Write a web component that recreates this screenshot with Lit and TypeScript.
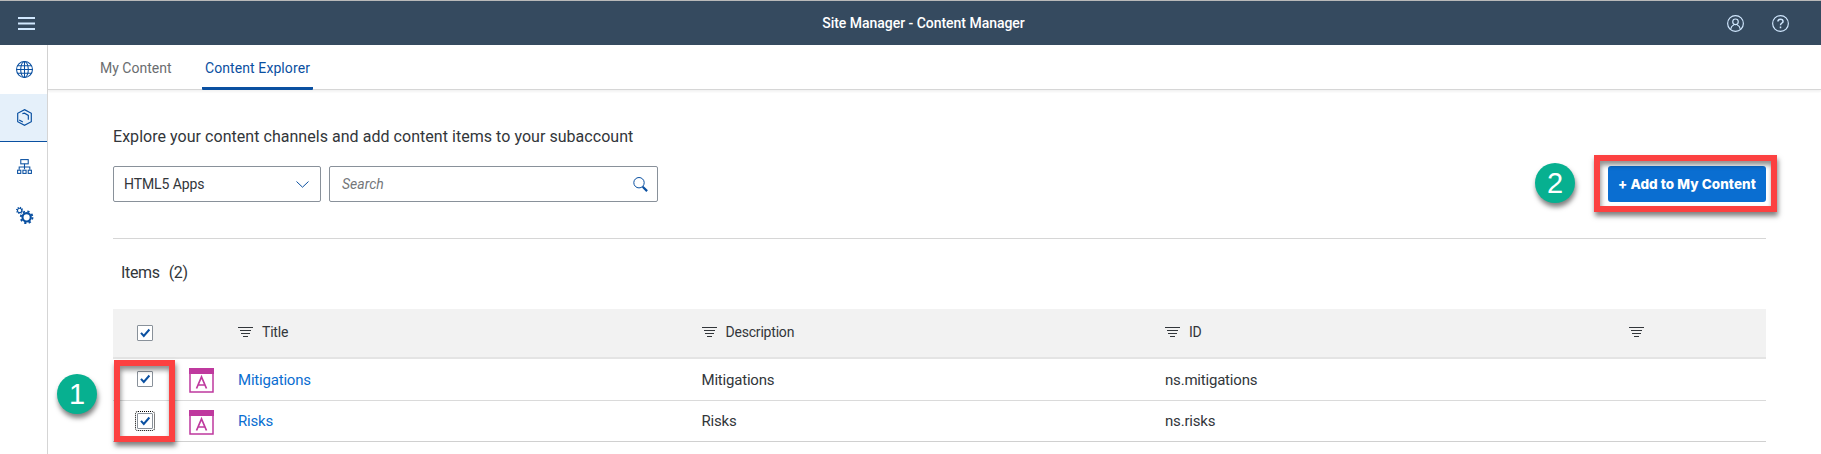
import { LitElement, html, css, svg } from 'lit';
import { customElement } from 'lit/decorators.js';

interface Item {
  title: string;
  id: string;
  focused: boolean;
}

const items: Item[] = [
  { title: 'Mitigations', id: 'ns.mitigations', focused: false },
  { title: 'Risks', id: 'ns.risks', focused: true },
];

const globe = svg`<g fill="none" stroke="currentColor" stroke-width="1"><circle cx="8" cy="8" r="7.5"/><ellipse cx="8" cy="8" rx="3.6" ry="7.5"/><path d="M8 .5v15M1.4 4.5h13.2M.5 8h15M1.4 11.5h13.2" /></g>`;
const hexagon = svg`<g fill="none" stroke="currentColor" stroke-width="1.1"><path d="M8 .6 14.4 4v8L8 15.4 1.6 12V4Z"/><path d="M6 4.3 8 3.9 11.6 6v4.2M3 10.3l3.4 2"/></g>`;
const hierarchy = svg`<g fill="none" stroke="currentColor" stroke-width="1"><rect x="4.5" y="1.5" width="7" height="4"/><path d="M8 5.5v5M3 11V8.5h10V11"/><rect x="1.5" y="11.5" width="3" height="3"/><rect x="6.5" y="11.5" width="3" height="3"/><rect x="11.5" y="11.5" width="3" height="3"/></g>`;
const gears = svg`<g fill="none" stroke="currentColor"><circle cx="10" cy="9.7" r="3.9" stroke-width="2"/><circle cx="10" cy="9.7" r="5.5" stroke-width="1.8" stroke-dasharray="2.1 2.22"/><circle cx="3.4" cy="3.2" r="2" stroke-width="1"/><circle cx="3.4" cy="3.2" r="2.9" stroke-width="1" stroke-dasharray="1.1 1.18"/></g>`;

@customElement('app-root')
export class AppRoot extends LitElement {
  static styles = css`
    :host { display: block; height: 454px; overflow: hidden; background: #fff; color: #32363a; font: 14px/20px Roboto, sans-serif; }
    * { box-sizing: border-box; }
    svg { display: block; overflow: visible; }
    .shell { height: 45px; border-top: 1px solid #b9b9b9; background: #354a5f; color: #fff; display: grid; grid-template-columns: 1fr auto 1fr; align-items: center; padding: 0 32px 0 18px; }
    .shell-title { font-weight: 500; letter-spacing: -.03px; margin-left: 28px; margin-right: -12px; }
    .actions { display: flex; justify-content: flex-end; gap: 28px; color: #d1e8ff; }
    .body { display: flex; height: 409px; }
    .side { flex: none; width: 48px; border-right: 1px solid #d5d5d5; color: #0a50a1; }
    .nav { height: 49px; padding-left: 16px; display: flex; align-items: center; }
    .nav.selected { background: #e5f0fa; height: 48px; border-bottom: 1px solid #0a50a1; }
    .main { flex: 1; min-width: 0; }
    .tabs { display: flex; height: 45px; padding-left: 44px; gap: 22px; border-bottom: 1px solid #d6d6d6; box-shadow: 0 2px 2px #0000000d; color: #6a6d70; }
    .tab { padding: 13px 0 0 3px; height: 45px; white-space: nowrap; }
    .tab.first { width: 88px; padding-left: 8px; }
    .tab.active { width: 111px; color: #0a50a1; border-bottom: 3px solid #0a50a1; border-radius: 1px; letter-spacing: .09px; }
    .page { padding: 36px 55px 0 65px; }
    .lead { font-size: 16px; line-height: 22px; letter-spacing: .04px; }
    .toolbar { position: relative; margin-top: 18px; display: flex; height: 36px; gap: 8px; }
    .field { border: 1px solid #89919a; border-radius: 2px; display: flex; align-items: center; justify-content: space-between; padding: 0 11px 0 10px; }
    .select { width: 208px; letter-spacing: -.1px; }
    .search { width: 329px; padding: 0 9px 0 12px; font-style: italic; color: #74777a; }
    .blue { color: #0a50a1; }
    .add { margin-left: auto; width: 158px; border: 0; border-radius: 3px; background: #0a6ed1; color: #fff; font: 800 13.5px Inter, sans-serif; letter-spacing: .06px; padding: 0; white-space: nowrap; }
    .frame { position: absolute; border: 6px solid #fc4141; box-shadow: 1px 4px 5px #00000080, inset 1px 4px 5px #00000070; pointer-events: none; }
    .frame.button { left: 1481px; top: -11px; width: 183px; height: 57px; }
    .frame.boxes { left: 1px; top: 51px; width: 61px; height: 82px; }
    .badge { position: absolute; width: 40px; height: 40px; border-radius: 50%; background: #07b090; color: #fff; font: 29px/41px "Liberation Sans", sans-serif; text-align: center; box-shadow: 1px 4px 5px #00000080; }
    .badge.two { left: 1422px; top: -3px; }
    .badge.one { left: -56px; top: 65px; }
    .divider { margin-top: 36px; border-top: 1px solid #d6d6d6; }
    .count { padding: 24px 0 0 8px; font-size: 16px; line-height: 20px; display: flex; gap: 9px; letter-spacing: -.35px; }
    .table { position: relative; margin-top: 26px; }
    .row { display: grid; grid-template-columns: 64px 61px 463.5px 463.5px 1fr 137px; align-items: center; height: 42px; border-bottom: 1px solid #dadada; font-size: 15px; letter-spacing: -.2px; }
    .row.last { height: 41px; border-color: #d0d0d0; }
    .row.head { height: 50px; background: #f2f2f2; border-bottom: 2px solid #e4e4e4; font-size: 14px; }
    .heading { display: flex; gap: 9px; align-items: center; height: 20px; margin-top: -3px; }
    .link { color: #0a6ed1; }
    .check { width: 16px; height: 16px; margin-left: 24px; margin-top: -1px; border: 1px solid #89919a; border-radius: 1px; background: #fff; }
    .head .check { margin-top: 0; }
    .check.focused { outline: 1px dotted #000; outline-offset: 1px; margin-top: 0; }
    .app { margin: 2px 0 0 12px; }
  `;

  icon(shape: unknown, size = 17) {
    return html`<svg width=${size} height=${size} viewBox="0 0 16 16">${shape}</svg>`;
  }

  check(focused = false) {
    return html`<div class="check ${focused ? 'focused' : ''}"><svg width="14" height="14" viewBox="0 0 14 14"><path d="m3 6.8 2.8 3.2L11.4 3.5" fill="none" stroke="#0a50a1" stroke-width="2"/></svg></div>`;
  }

  heading(label: string) {
    return html`<div class="heading"><svg width="15" height="12" viewBox="0 0 15 12"><path d="M0 1.5h15M2 4.5h11M3 7.5h9M5 10.5h5" stroke="#32363a"/></svg>${label}</div>`;
  }

  render() {
    return html`
      <header class="shell">
        <svg width="17" height="13" viewBox="0 0 17 13"><path d="M0 1h17M0 6.5h17M0 12h17" stroke="#d1e8ff" stroke-width="2"/></svg>
        <div class="shell-title">Site Manager - Content Manager</div>
        <div class="actions">
          ${this.icon(svg`<g fill="none" stroke="currentColor" stroke-width="1.1"><circle cx="8" cy="8" r="7.4"/><circle cx="8" cy="6.4" r="2.6"/><path d="M3.4 13.4c.4-2.4 1.5-3.5 3.1-4.2M12.6 13.4c-.4-2.4-1.5-3.5-3.1-4.2"/></g>`)}
          ${this.icon(svg`<g fill="none" stroke="currentColor"><circle cx="8" cy="8" r="7.4" stroke-width="1.1"/><path d="M5.6 6.2C5.6 4.6 6.6 3.9 8 3.9s2.4.8 2.4 2.1C10.4 7.6 8 7.5 8 9.6M8 10.8v1.6" stroke-width="1.4"/></g>`)}
        </div>
      </header>
      <div class="body">
        <nav class="side">
          <div class="nav">${this.icon(globe)}</div>
          <div class="nav selected">${this.icon(hexagon)}</div>
          <div class="nav">${this.icon(hierarchy)}</div>
          <div class="nav">${this.icon(gears)}</div>
        </nav>
        <main class="main">
          <div class="tabs">
            <div class="tab first">My Content</div>
            <div class="tab active">Content Explorer</div>
          </div>
          <div class="page">
            <div class="lead">Explore your content channels and add content items to your subaccount</div>
            <div class="toolbar">
              <div class="field select">HTML5 Apps<svg width="13" height="7" viewBox="0 0 13 7"><path d="m.5.5 6 5.7 6-5.7" fill="none" stroke="#0a50a1"/></svg></div>
              <div class="field search">Search<svg class="blue" width="15" height="15" viewBox="0 0 15 15"><circle cx="6" cy="5.7" r="5.2" fill="none" stroke="currentColor"/><path d="m9.7 9.7 4.4 4.4" stroke="currentColor" stroke-width="2.2"/></svg></div>
              <button class="add">+ Add to My Content</button>
              <div class="badge two">2</div>
              <div class="frame button"></div>
            </div>
            <div class="divider"></div>
            <div class="count"><span>Items</span><span>(2)</span></div>
            <div class="table">
              <div class="row head">
                ${this.check()}<span></span>${this.heading('Title')}${this.heading('Description')}${this.heading('ID')}${this.heading('')}
              </div>
              ${items.map((item, i) => html`
                <div class="row ${i === items.length - 1 ? 'last' : ''}">
                  ${this.check(item.focused)}
                  <svg class="app" width="25" height="25" viewBox="0 0 25 25"><path d="M1 1h23v23H1Z" fill="#fff" stroke="#bf399e" stroke-width="1.5"/><path d="M0 0h25v6H0Z" fill="#bf399e"/><path d="m7.5 20.5 5-11.5 5 11.5M9 17h7" fill="none" stroke="#bf399e" stroke-width="1.7"/></svg>
                  <span class="link">${item.title}</span><span>${item.title}</span><span>${item.id}</span><span></span>
                </div>`)}
              <div class="frame boxes"></div>
              <div class="badge one">1</div>
            </div>
          </div>
        </main>
      </div>`;
  }
}
